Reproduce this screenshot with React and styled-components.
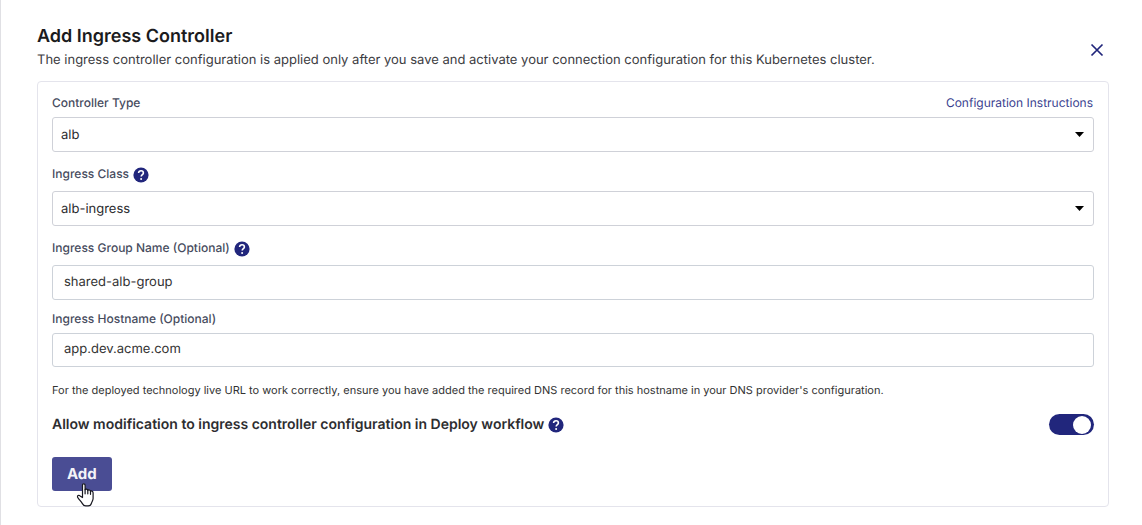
import { useState } from "react";
import styled, { createGlobalStyle } from "styled-components";

const GlobalStyle = createGlobalStyle`
  *, *::before, *::after {
    box-sizing: border-box;
  }

  body {
    margin: 0;
    background: #fff;
    color: #333;
    font-family: Inter, "Liberation Sans", sans-serif;
    font-size: 13px;
    line-height: 16px;
    text-rendering: geometricPrecision;
  }
`;

const StyledPage = styled.main`
  min-height: 100vh;
  padding: 25px 33px 18px 36px;
  border-left: 1px solid #e0e0e4;
`;

const StyledHeader = styled.header`
  display: flex;
  justify-content: space-between;
  align-items: center;
  margin-bottom: 10px;
`;

const StyledTitle = styled.h1`
  margin: 0;
  color: #1b1b1d;
  font-size: 18px;
  font-weight: 600;
  line-height: 24px;
`;

const StyledSubtitle = styled.p`
  margin: 0;
  color: #3c3c3f;
  line-height: 22px;
`;

const StyledClose = styled.button`
  display: flex;
  margin: 4px 4px 0 16px;
  padding: 0;
  border: 0;
  background: none;
  color: #20257b;
  cursor: pointer;
`;

const StyledCard = styled.form`
  padding: 13px 14px 15px;
  border: 1px solid #e4e4ec;
  border-radius: 4px;
`;

const StyledField = styled.div`
  display: flex;
  flex-direction: column;
  gap: 6px;
  margin-bottom: ${({ $last }) => ($last ? "15px" : "11px")};
`;

const StyledLabelRow = styled.div`
  display: flex;
  align-items: center;
  gap: 4px;
  height: ${({ $help }) => ($help ? "22px" : "16px")};
`;

const StyledLabel = styled.label`
  color: #474c5e;
  font-size: 12px;
  font-weight: 500;
`;

const StyledLink = styled.a`
  margin-left: auto;
  padding-right: 1px;
  color: #3b3f8f;
  font-size: 12px;
  text-decoration: none;
`;

const StyledControl = styled.div`
  position: relative;
  display: flex;
`;

const StyledSelect = styled.select`
  flex: 1;
  height: 35px;
  padding: 0 32px 0 8px;
  border: 1px solid #cfd1d8;
  border-radius: 3px;
  appearance: none;
  background: #fff;
  color: #2b2b2e;
  font: inherit;
  text-rendering: inherit;
`;

const StyledCaret = styled.svg`
  position: absolute;
  top: 15px;
  right: 10px;
  pointer-events: none;
`;

const StyledInput = styled.input`
  flex: 1;
  height: ${({ $short }) => ($short ? "34px" : "35px")};
  padding: 0 12px 2px 11px;
  border: 1px solid #cdd2d9;
  border-radius: 3px;
  background: #fff;
  color: #333;
  font: inherit;
  text-rendering: inherit;
`;

const StyledNote = styled.p`
  margin: 0 0 16px;
  font-size: 11px;
`;

const StyledToggleRow = styled.div`
  display: flex;
  align-items: center;
  gap: 4px;
  margin-bottom: 22px;
`;

const StyledToggleLabel = styled.label`
  color: #2d2d30;
  font-size: 14px;
  font-weight: 600;
`;

const StyledToggle = styled.input`
  display: flex;
  align-items: center;
  width: 45px;
  height: 21px;
  margin: 0 0 0 auto;
  padding: 0 3px;
  border-radius: 11px;
  appearance: none;
  background: #b5b7c6;
  cursor: pointer;

  &::before {
    content: "";
    width: 18px;
    height: 18px;
    border-radius: 50%;
    background: #fff;
  }

  &:checked {
    justify-content: flex-end;
    background: #21267c;
  }
`;

const StyledAddButton = styled.button`
  position: relative;
  display: block;
  height: 34px;
  padding: 0 15px;
  border: 0;
  border-radius: 3px;
  background: #4a4d94;
  color: #f3f3f8;
  font: inherit;
  font-size: 15px;
  font-weight: 700;
  text-rendering: inherit;
  cursor: pointer;
`;

const StyledPointer = styled.svg`
  position: absolute;
  top: 26px;
  left: 24px;
`;

const StyledHelp = styled.svg`
  flex: none;
  margin-top: 1px;
`;

const HelpIcon = () => (
  <StyledHelp width="16" height="16" viewBox="0 0 16 16" aria-hidden="true">
    <circle cx="8" cy="8" r="7.6" fill="#21267c" />
    <path
      d="M5.6 6.1C5.6 4.6 6.6 3.8 8 3.8s2.4.8 2.4 2.1c0 1.7-2.2 1.8-2.2 3.6"
      fill="none"
      stroke="#fff"
      strokeWidth="1.6"
    />
    <circle cx="8.1" cy="11.9" r="1" fill="#fff" />
  </StyledHelp>
);

const Caret = () => (
  <StyledCaret width="9" height="5" viewBox="0 0 9 5" aria-hidden="true">
    <path d="M0 0h9L4.5 5z" fill="#000" />
  </StyledCaret>
);

const PointerIcon = () => (
  <StyledPointer width="19" height="25" viewBox="0 0 19 25" aria-hidden="true">
    <path
      d="M6.5 14.5V2.4c0-1.1.5-1.6 1.3-1.6s1.3.5 1.3 1.6v4.3c.3-.8 2.4-.8 2.7.6.5-.6 2.4-.5 2.7.8.6-.5 2.6-.1 2.6 1.7v5.6c0 1.7-1.1 3.3-1.5 4.4-.5 1.9-1.7 3.1-3.4 3.1H9.7c-1.7 0-2.6-1-3.3-2.3-1.2-2-2.7-3.3-3.9-4.9-.8-1.1-1.4-2-1-2.7.6-.8 1.8-.8 2.6-.1z"
      fill="#fff"
      stroke="#17171f"
      strokeWidth="1.2"
      strokeLinejoin="round"
    />
    <path
      d="M9.1 6.5v4.3M11.8 7.3v3.5M14.5 8v3.3"
      fill="none"
      stroke="#17171f"
      strokeWidth="1.2"
      strokeLinecap="round"
    />
  </StyledPointer>
);

const Field = ({ id, label, help, last, link, children }) => (
  <StyledField $last={last}>
    <StyledLabelRow $help={help}>
      <StyledLabel htmlFor={id}>{label}</StyledLabel>
      {help && <HelpIcon />}
      {link && <StyledLink href="#instructions">{link}</StyledLink>}
    </StyledLabelRow>
    <StyledControl>{children}</StyledControl>
  </StyledField>
);

const App = () => {
  const [allowed, setAllowed] = useState(true);

  return (
    <>
      <GlobalStyle />
      <StyledPage>
        <StyledHeader>
          <div>
            <StyledTitle>Add Ingress Controller</StyledTitle>
            <StyledSubtitle>
              The ingress controller configuration is applied only after you
              save and activate your connection configuration for this
              Kubernetes cluster.
            </StyledSubtitle>
          </div>
          <StyledClose type="button" aria-label="Close">
            <svg width="16" height="16" viewBox="0 0 16 16">
              <path
                d="M2.5 2.5l11 11M13.5 2.5l-11 11"
                stroke="currentColor"
                strokeWidth="1.7"
              />
            </svg>
          </StyledClose>
        </StyledHeader>

        <StyledCard onSubmit={(e) => e.preventDefault()}>
          <Field
            id="controllerType"
            label="Controller Type"
            link="Configuration Instructions"
          >
            <StyledSelect id="controllerType">
              <option>alb</option>
            </StyledSelect>
            <Caret />
          </Field>

          <Field id="ingressClass" label="Ingress Class" help>
            <StyledSelect id="ingressClass">
              <option>alb-ingress</option>
            </StyledSelect>
            <Caret />
          </Field>

          <Field id="groupName" label="Ingress Group Name (Optional)" help>
            <StyledInput id="groupName" defaultValue="shared-alb-group" />
          </Field>

          <Field id="hostname" label="Ingress Hostname (Optional)" last>
            <StyledInput id="hostname" defaultValue="app.dev.acme.com" $short />
          </Field>

          <StyledNote>
            For the deployed technology live URL to work correctly, ensure you
            have added the required DNS record for this hostname in your DNS
            provider's configuration.
          </StyledNote>

          <StyledToggleRow>
            <StyledToggleLabel htmlFor="allowModification">
              Allow modification to ingress controller configuration in Deploy
              workflow
            </StyledToggleLabel>
            <HelpIcon />
            <StyledToggle
              id="allowModification"
              type="checkbox"
              role="switch"
              checked={allowed}
              onChange={(e) => setAllowed(e.target.checked)}
            />
          </StyledToggleRow>

          <StyledAddButton type="submit">
            Add
            <PointerIcon />
          </StyledAddButton>
        </StyledCard>
      </StyledPage>
    </>
  );
};

export default App;
